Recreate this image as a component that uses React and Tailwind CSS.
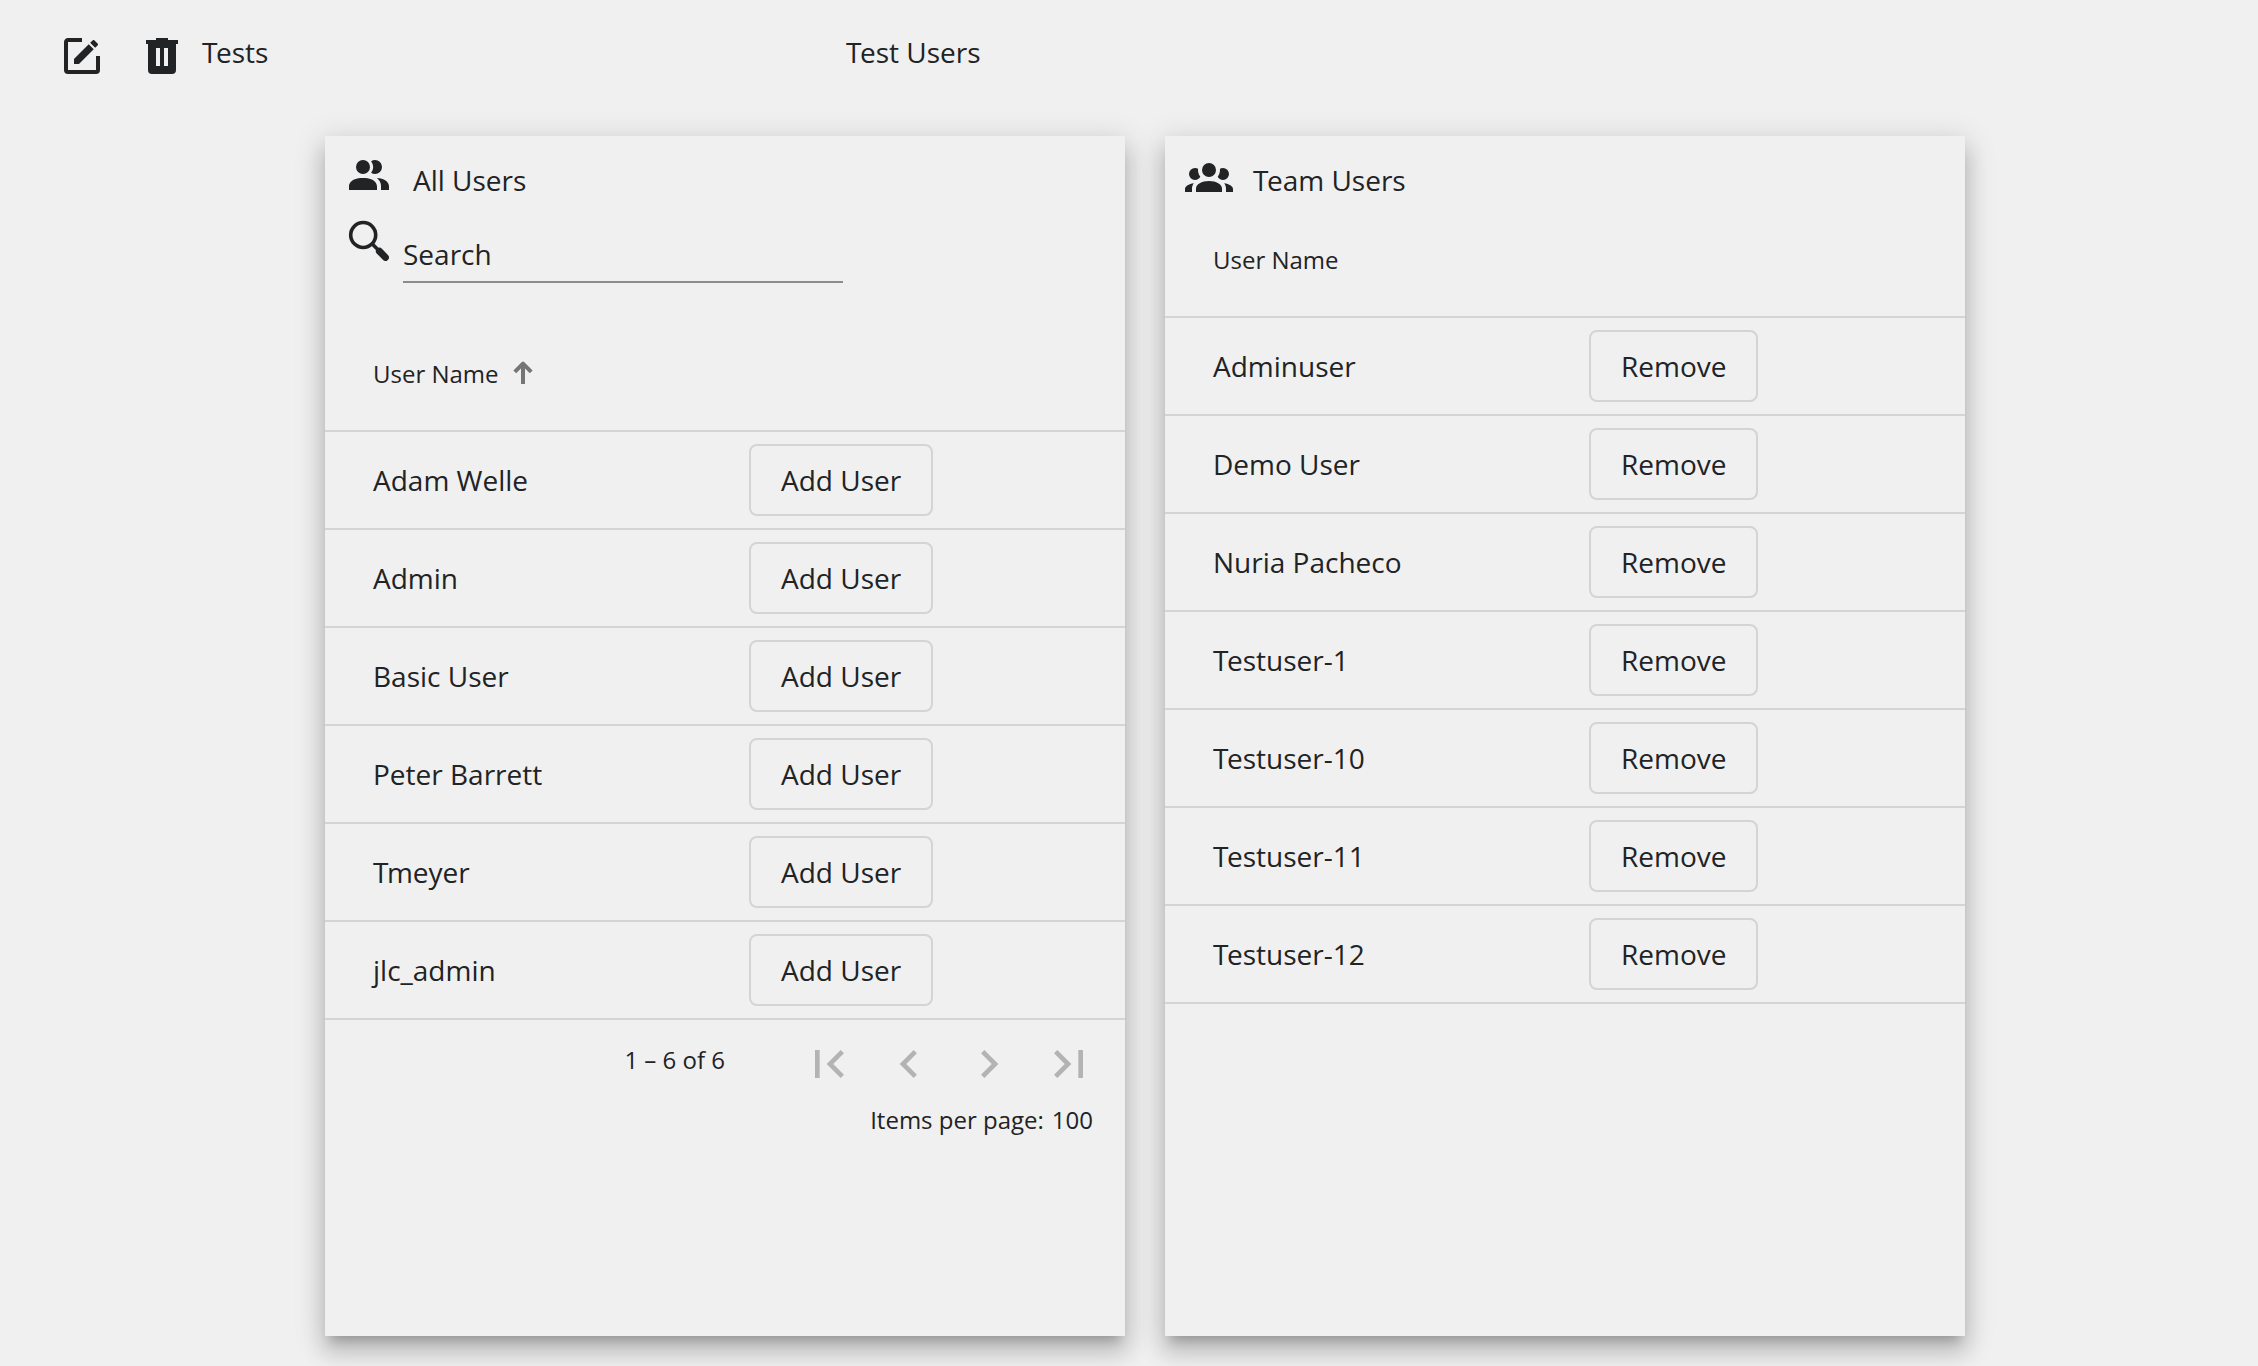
const PATHS = {
  edit: "M5,3C3.89,3 3,3.89 3,5V19A2,2 0 0,0 5,21H19A2,2 0 0,0 21,19V12H19V19H5V5H12V3H5M17.78,4C17.61,4 17.43,4.07 17.3,4.2L16.08,5.41L18.58,7.91L19.8,6.7C20.06,6.44 20.06,6 19.8,5.75L18.25,4.2C18.12,4.07 17.95,4 17.78,4M15.37,6.12L8,13.5V16H10.5L17.87,8.62L15.37,6.12Z",
  trash: "M9,3V4H4V6H5V19A2,2 0 0,0 7,21H17A2,2 0 0,0 19,19V6H20V4H15V3H9M9,8H11V17H9V8M13,8H15V17H13V8Z",
  users: "M16 17V19H2V17S2 13 9 13 16 17 16 17M12.5 7.5A3.5 3.5 0 1 0 9 11A3.5 3.5 0 0 0 12.5 7.5M15.94 13A5.32 5.32 0 0 1 18 17V19H22V17S22 13.37 15.94 13M15 4A3.39 3.39 0 0 0 13.07 4.59A5 5 0 0 1 13.07 10.41A3.39 3.39 0 0 0 15 11A3.5 3.5 0 0 0 15 4Z",
  group: "M12,5.5A3.5,3.5 0 0,1 15.5,9A3.5,3.5 0 0,1 12,12.5A3.5,3.5 0 0,1 8.5,9A3.5,3.5 0 0,1 12,5.5M5,8C5.56,8 6.08,8.15 6.53,8.42C6.38,9.85 6.8,11.27 7.66,12.38C7.16,13.34 6.16,14 5,14A3,3 0 0,1 2,11A3,3 0 0,1 5,8M19,8A3,3 0 0,1 22,11A3,3 0 0,1 19,14C17.84,14 16.84,13.34 16.34,12.38C17.2,11.27 17.62,9.85 17.47,8.42C17.92,8.15 18.44,8 19,8M5.5,18.25C5.5,16.18 8.41,14.5 12,14.5C15.59,14.5 18.5,16.18 18.5,18.25V20H5.5V18.25M0,20V18.5C0,17.11 1.89,15.94 4.45,15.6C3.86,16.28 3.5,17.22 3.5,18.25V20H0M24,20H20.5V18.25C20.5,17.22 20.14,16.28 19.55,15.6C22.11,15.94 24,17.11 24,18.5V20Z",
  first: "M18.41 16.59L13.82 12l4.59-4.59L17 6l-6 6 6 6zM6 6h2v12H6z",
  prev: "M15.41 7.41L14 6l-6 6 6 6 1.41-1.41L10.83 12z",
  next: "M10 6L8.59 7.41 13.17 12l-4.58 4.59L10 18l6-6z",
  last: "M5.59 7.41L10.18 12l-4.59 4.59L7 18l6-6-6-6zM16 6h2v12h-2z",
};

function Icon({ name, className = "size-12" }) {
  return (
    <svg viewBox="0 0 24 24" fill="currentColor" className={`shrink-0 ${className}`}>
      <path d={PATHS[name]} />
    </svg>
  );
}

function SearchIcon() {
  return (
    <svg viewBox="0 0 24 24" className="size-12 shrink-0" fill="none" stroke="currentColor">
      <circle cx="9.1" cy="9.5" r="6.25" strokeWidth="1.8" />
      <path d="M13.4 13.8L16.5 16.9" strokeWidth="1.8" />
      <path d="M17.2 17.6L20.2 20.7" strokeWidth="3.5" strokeLinecap="round" />
    </svg>
  );
}

function SortArrow() {
  return (
    <svg viewBox="0 0 28 28" className="ml-[10px] size-7" fill="none" stroke="#757575" strokeWidth="4">
      <path d="M14 4V24" />
      <path d="M5.8 11.8L14 3.6L22.2 11.8" strokeLinejoin="round" />
    </svg>
  );
}

// Tightens the gap after a leading capital T.
function Label({ children }) {
  return children.startsWith("T") ? (
    <>
      <span className="tracking-[-1.5px]">T</span>
      {children.slice(1)}
    </>
  ) : (
    children
  );
}

function Row({ name, action }) {
  return (
    <div className="flex h-[98px] items-center border-b-2 border-[#d4d4d4] pl-12">
      <span className="w-[376px]"><Label>{name}</Label></span>
      <button className="h-[72px] rounded-lg border-2 border-[#d4d4d4] px-[30px]">{action}</button>
    </div>
  );
}

function Card({ children }) {
  return (
    <section className="h-[1200px] w-[800px] bg-[#f0f0f0] shadow-[0_10px_10px_-6px_rgba(0,0,0,0.2),0_16px_20px_2px_rgba(0,0,0,0.14),0_6px_28px_4px_rgba(0,0,0,0.12)]">
      {children}
    </section>
  );
}

const ALL = ["Adam Welle", "Admin", "Basic User", "Peter Barrett", "Tmeyer", "jlc_admin"];
const TEAM = ["Adminuser", "Demo User", "Nuria Pacheco", "Testuser-1", "Testuser-10", "Testuser-11", "Testuser-12"];

export default function App() {
  return (
    <div className="h-[1366px] w-[2258px] overflow-hidden bg-[#f0f0f0] font-['Open_Sans','Noto_Sans',sans-serif] text-[28px] leading-10 text-[#212325]">
      <header className="flex h-[136px] items-start pt-8 pl-[58px]">
        <Icon name="edit" />
        <Icon name="trash" className="ml-8 size-12" />
        <h1 className="ml-4 w-[644px]"><Label>Tests</Label></h1>
        <h2><Label>Test Users</Label></h2>
      </header>
      <main className="flex gap-10 pl-[325px]">
        <Card>
          <div className="flex h-[72px] pt-4 pl-5">
            <Icon name="users" />
            <h3 className="mt-2 ml-5">All Users</h3>
          </div>
          <div className="flex h-[122px] pt-2 pl-5">
            <SearchIcon />
            <div className="mt-[18px] ml-[10px] h-[49px] w-[440px] border-b-2 border-[#8c8c8c]">Search</div>
          </div>
          <div className="flex h-[102px] items-center border-b-2 border-[#d4d4d4] pb-3 pl-12 text-2xl">
            User Name
            <SortArrow />
          </div>
          {ALL.map((n) => <Row key={n} name={n} action="Add User" />)}
          <div className="pr-4 text-2xl leading-10">
            <div className="flex h-[88px] items-center justify-end">
              <span className="mr-16 mb-2">1 – 6 of 6</span>
              {["first", "prev", "next", "last"].map((n) => (
                <button key={n} className="flex size-20 items-center justify-center text-[#b3b3b3]">
                  <Icon name={n} className="size-14" />
                </button>
              ))}
            </div>
            <div className="-mt-2 flex justify-end gap-2 pr-4">
              <span>Items per page:</span>
              <span>100</span>
            </div>
          </div>
        </Card>
        <Card>
          <div className="flex h-[72px] pt-4 pl-5">
            <Icon name="group" />
            <h3 className="mt-2 ml-5"><Label>Team Users</Label></h3>
          </div>
          <div className="flex h-[110px] items-center border-b-2 border-[#d4d4d4] pb-1 pl-12 text-2xl">User Name</div>
          {TEAM.map((n) => <Row key={n} name={n} action="Remove" />)}
        </Card>
      </main>
    </div>
  );
}
